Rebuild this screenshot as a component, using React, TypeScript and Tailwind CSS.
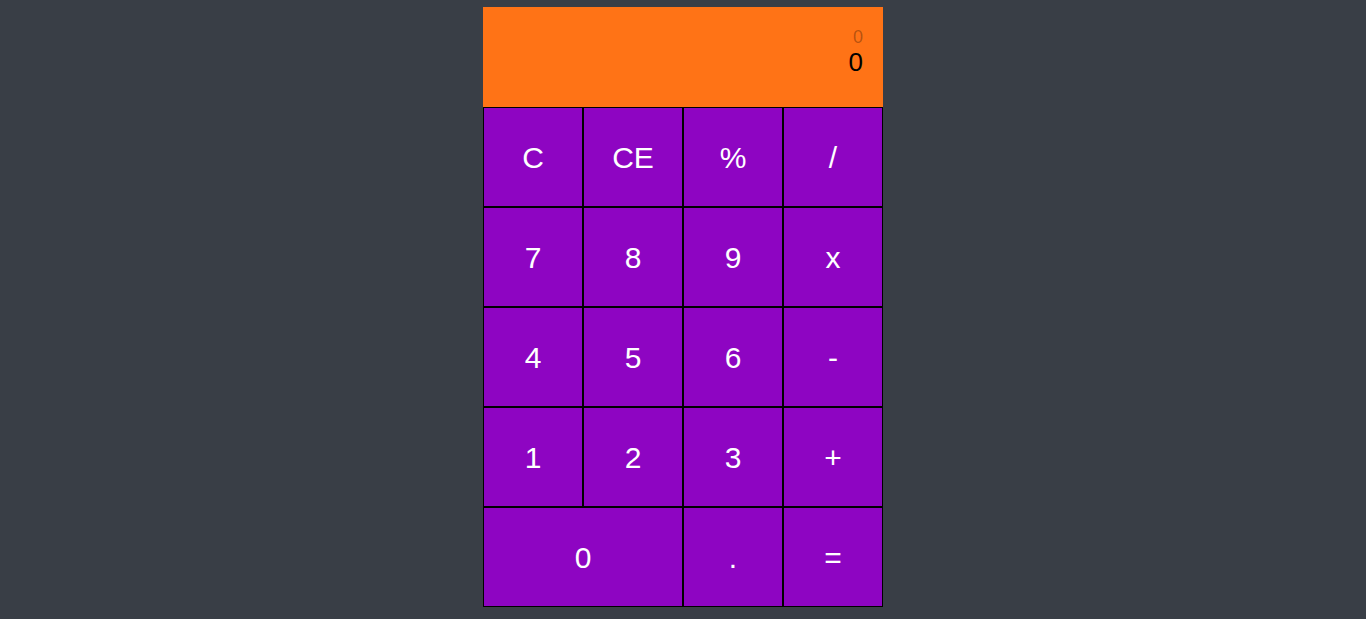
import React, { useState } from 'react';

const keys: { label: string; wide?: boolean }[] = [
  { label: 'C' }, { label: 'CE' }, { label: '%' }, { label: '/' },
  { label: '7' }, { label: '8' }, { label: '9' }, { label: 'x' },
  { label: '4' }, { label: '5' }, { label: '6' }, { label: '-' },
  { label: '1' }, { label: '2' }, { label: '3' }, { label: '+' },
  { label: '0', wide: true }, { label: '.' }, { label: '=' },
];

export default function App() {
  const [prev] = useState('0');
  const [current] = useState('0');

  return (
    <div className="min-h-screen bg-[#393e46] pt-[7px] font-['Liberation_Sans',Arial,sans-serif]">
      <div className="w-[400px] mx-auto">
        {/* Display */}
        <div className="h-[100px] bg-[#ff7316] p-5 flex flex-col items-end">
          <div className="text-[18px] leading-[1.15] text-black/30">{prev}</div>
          <div className="text-[26px] leading-[1.15] text-black">{current}</div>
        </div>

        {/* Keypad */}
        <div className="grid grid-cols-4">
          {keys.map(k => (
            <button
              key={k.label}
              className={`h-[100px] bg-[#8e05c2] border border-black text-white text-[30px] flex items-center justify-center ${k.wide ? 'col-span-2' : ''}`}
            >
              {k.label}
            </button>
          ))}
        </div>
      </div>
    </div>
  );
}
